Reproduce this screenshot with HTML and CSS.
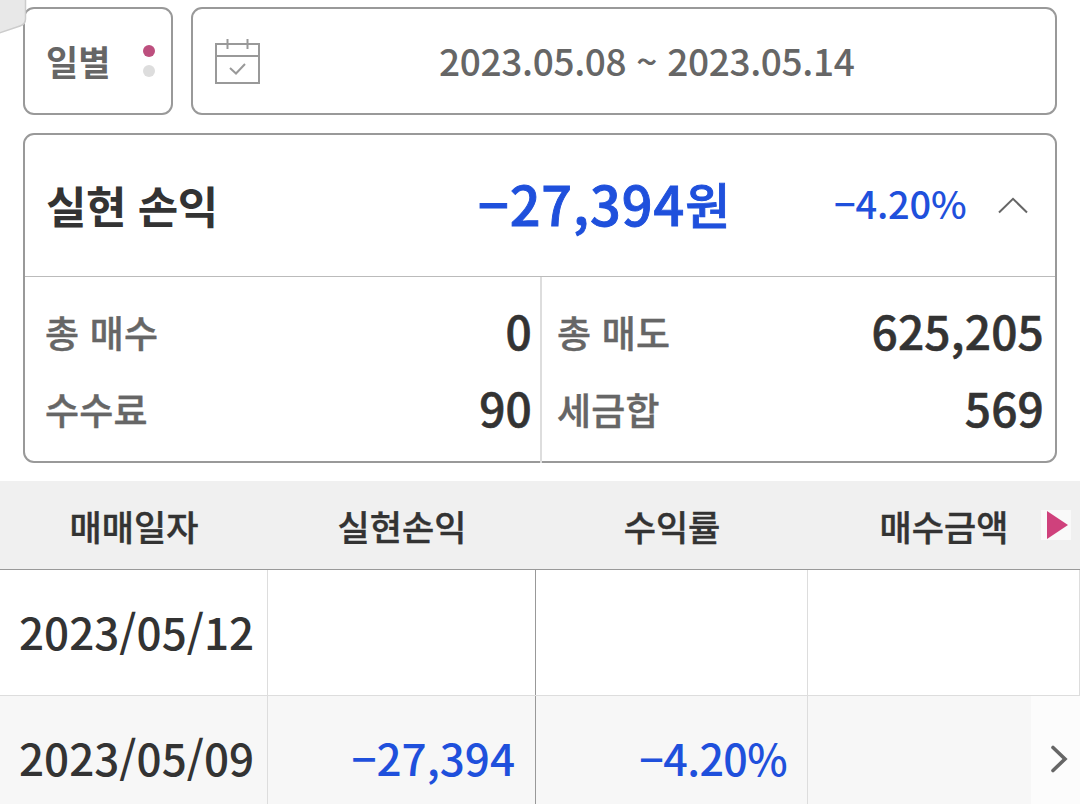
FILE: index.html
```
<!DOCTYPE html>
<html lang="ko">
<head>
    <meta charset="UTF-8">
    <meta name="viewport" content="width=device-width, initial-scale=1.0">
    <title>실현 손익</title>
    <link rel="stylesheet" href="styles.css">
</head>
<body>

<svg class="corner-tab" width="28" height="36" viewBox="0 0 28 36">
    <path d="M-2 -2H25.5V19Q25.5 24 20 26L-2 33.5Z" fill="#e8e8e8" stroke="#ccc" stroke-width="1.5"/>
</svg>

<div class="filters">
    <div class="box period">
        <span class="period-name">일별</span>
        <div class="dots">
            <span class="dot active"></span>
            <span class="dot"></span>
        </div>
    </div>
    <div class="box date-range">
        <svg class="calendar" width="45" height="46" viewBox="0 0 45 46" fill="none" stroke="#999" stroke-width="2">
            <rect x="1" y="6" width="43" height="39"/>
            <path d="M1 18H44M12.5 1V11M32.5 1V11"/>
            <path d="M15 30L21 35.5L30 26"/>
        </svg>
        <span class="dates">2023.05.08 ~ 2023.05.14</span>
    </div>
</div>

<div class="box summary">
    <div class="summary-head">
        <h2>실현 손익</h2>
        <span class="profit">−27,394<span class="won">원</span></span>
        <span class="rate">−4.20%</span>
        <svg class="fold" width="30" height="17" viewBox="0 0 30 17" fill="none" stroke="#666" stroke-width="2">
            <path d="M1 15.5L15 1.8L29 15.5"/>
        </svg>
    </div>
    <div class="summary-body">
        <div class="summary-col">
            <div class="item"><span class="label">총 매수</span><span class="value">0</span></div>
            <div class="item"><span class="label">수수료</span><span class="value">90</span></div>
        </div>
        <div class="summary-col">
            <div class="item"><span class="label">총 매도</span><span class="value">625,205</span></div>
            <div class="item"><span class="label">세금합</span><span class="value">569</span></div>
        </div>
    </div>
</div>

<div class="grid">
    <div class="row head">
        <div class="cell">매매일자</div>
        <div class="cell">실현손익</div>
        <div class="cell">수익률</div>
        <div class="cell">매수금액</div>
        <svg class="next" width="30" height="30" viewBox="0 0 30 30">
            <rect width="30" height="30" fill="#f9f9f9"/>
            <path d="M6 1L27 15L6 29Z" fill="#cf417c"/>
        </svg>
    </div>
    <div class="row">
        <div class="cell date">2023/05/12</div>
        <div class="cell"></div>
        <div class="cell"></div>
        <div class="cell"></div>
    </div>
    <div class="row even">
        <div class="cell date">2023/05/09</div>
        <div class="cell minus">−27,394</div>
        <div class="cell minus percent">−4.20%</div>
        <div class="cell"></div>
        <div class="more">
            <svg width="18" height="28" viewBox="0 0 18 28" fill="none" stroke="#666" stroke-width="3.6" stroke-linecap="round">
                <path d="M3 2.5L15 14L3 25.5"/>
            </svg>
        </div>
    </div>
</div>

</body>
</html>
```
FILE: styles.css
```
* {
    box-sizing: border-box;
}
body {
    margin: 0;
    height: 804px;
    overflow: hidden;
    background: #fff;
    color: #333;
    font-family: "Noto Sans CJK KR", sans-serif;
    font-weight: 500;
    line-height: 1;
    white-space: nowrap;
}
.corner-tab {
    position: absolute;
    top: 0;
    left: 0;
}
.filters {
    display: flex;
    gap: 18px;
    padding: 7px 23px 18px;
}
.box {
    border: 2px solid #999;
    border-radius: 11px;
}
.period {
    display: flex;
    align-items: center;
    justify-content: space-between;
    width: 150px;
    height: 108px;
    padding: 0 16px 0 21px;
    color: #666;
}
.period-name {
    padding-bottom: 2px;
    font-size: 35px;
    font-weight: bold;
}
.dots {
    display: flex;
    flex-direction: column;
    gap: 8px;
}
.dot {
    width: 12px;
    height: 12px;
    border-radius: 50%;
    background: #ddd;
}
.dot.active {
    background: #bd4f7e;
}
.date-range {
    display: flex;
    align-items: center;
    flex: 1;
    padding-left: 22px;
    color: #666;
}
.dates {
    flex: 1;
    padding: 0 0 2px 179px;
    font-size: 37px;
    letter-spacing: -0.35px;
}
.summary {
    height: 330px;
    margin: 0 23px 18px;
}
.summary-head {
    display: flex;
    align-items: center;
    height: 142px;
    padding: 0 27px 0 21px;
    border-bottom: 1px solid #bbb;
}
h2 {
    width: 431px;
    margin: 0;
    padding-bottom: 2px;
    font-size: 44px;
    letter-spacing: -0.5px;
}
.profit {
    width: 357px;
    padding: 0 0 6px 1px;
    color: #1f50dc;
    font-size: 54px;
    letter-spacing: 0.9px;
    -webkit-text-stroke: 0.9px;
}
.won {
    position: relative;
    top: -2px;
    font-size: 49px;
}
.rate {
    flex: 1;
    padding-bottom: 5px;
    color: #1f50dc;
    font-size: 38px;
    letter-spacing: -0.2px;
}
.summary-body {
    display: flex;
    height: 186px;
}
.summary-col {
    width: 516px;
    padding: 17px 8px 0 20px;
}
.summary-col + .summary-col {
    border-left: 2px solid #ddd;
    padding: 17px 11px 0 15px;
}
.item {
    display: flex;
    align-items: center;
    justify-content: space-between;
    height: 77px;
}
.label {
    padding-bottom: 1px;
    color: #666;
    font-size: 37px;
    letter-spacing: 0.2px;
    -webkit-text-stroke: 0.4px;
}
.value {
    padding-bottom: 6px;
    font-size: 46px;
    letter-spacing: 0.2px;
    -webkit-text-stroke: 0.6px;
}
.row {
    position: relative;
    display: grid;
    grid-template-columns: 268px 268px 272px 272px;
    height: 126px;
    border-bottom: 1px solid #ddd;
}
.cell {
    display: flex;
    align-items: center;
    justify-content: flex-end;
    padding: 0 20px 4px 0;
    border-right: 1px solid #ddd;
    font-size: 44px;
}
.cell:nth-child(2) {
    border-right-color: #999;
}
.cell.date {
    justify-content: flex-start;
    padding-left: 19px;
}
.minus {
    color: #1f50dc;
}
.percent {
    padding-bottom: 2px;
    font-size: 43px;
    letter-spacing: -0.6px;
}
.even {
    background: #f7f7f7;
}
.head {
    height: 89px;
    background: #f0f0f0;
    border-bottom-color: #999;
}
.head .cell {
    justify-content: center;
    padding: 0;
    border: 0;
    font-size: 35px;
    -webkit-text-stroke: 0.4px;
}
.next {
    position: absolute;
    top: 29px;
    right: 9px;
}
.more {
    position: absolute;
    top: 0;
    right: 0;
    display: flex;
    align-items: center;
    justify-content: flex-end;
    width: 49px;
    height: 126px;
    padding-right: 12px;
    background: #fcfcfc;
}
```
